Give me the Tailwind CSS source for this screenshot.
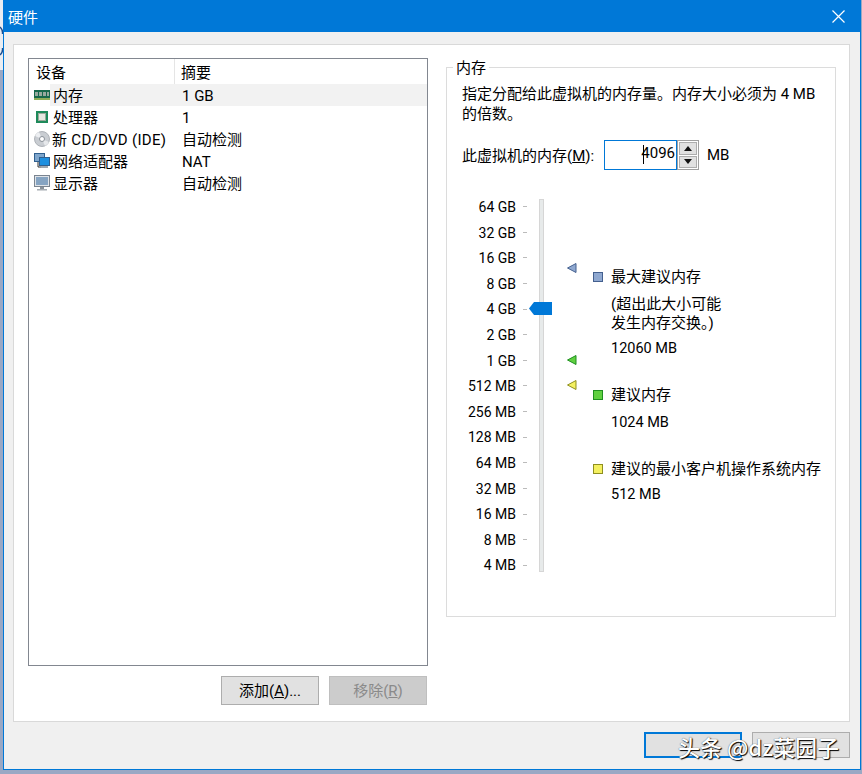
<!DOCTYPE html>
<html><head><meta charset="utf-8"><script src="https://cdn.jsdelivr.net/npm/@tailwindcss/browser@4"></script></head>
<body class="m-0 bg-[#9aa8c4] overflow-hidden">
<div class="w-[862px] h-[774px] relative font-['Roboto','Noto_Sans_CJK_SC',sans-serif] text-[15px] leading-[22px] text-black">
<div class="absolute left-0 top-0 w-[3px] h-[70px] bg-[#e9edf2]">
  <svg width="3" height="70" viewBox="0 0 3 70"><path d="M0 27C2 29 3 31 2.500 34M0 55C2 53 3 51 2.500 48" stroke="#1f4f8f" stroke-width="1.500" fill="none"/></svg>
</div>
<div class="absolute left-[3px] top-0 w-[858px] h-[770px] flex flex-col bg-[#f0f0f0] border border-[#0078d7]">
  <div class="h-[31px] shrink-0 bg-[#0078d7] text-white flex items-center justify-between pl-[4px] pr-[15px]">
    <span class="font-['Noto_Sans_CJK_SC',sans-serif]">硬件</span>
    <svg width="13" height="13" viewBox="0 0 13 13"><path d="M0.500 0.500L12.500 12.500M12.500 0.500L0.500 12.500" stroke="#fff" stroke-width="1.200" fill="none"/></svg>
  </div>
  <div class="ml-[9px] mr-[10px] mt-[12px] h-[678px] bg-white border border-[#d9d9d9] flex pl-[14px] pt-[13px]">
    <div class="w-[400px] shrink-0 flex flex-col">
      <div class="h-[608px] border border-[#828790] bg-white">
        <div class="flex h-[25px] items-center">
          <span class="w-[146px] pl-[7px] border-r border-[#e5e5e5] h-[25px] leading-[29px]">设备</span>
          <span class="pl-[6px] h-[25px] leading-[29px]">摘要</span>
        </div>
        <div class="flex h-[22px] items-center">
          <svg width="16" height="10" viewBox="0 0 16 10" class="ml-[5px] shrink-0"><rect width="16" height="8" fill="#17694c"/><rect x="1" y="2" width="3" height="4" fill="#98aaa0"/><rect x="5" y="2" width="3" height="4" fill="#98aaa0"/><rect x="9" y="2" width="3" height="4" fill="#98aaa0"/><rect x="13" y="2" width="2" height="4" fill="#98aaa0"/><rect y="8" width="16" height="2" fill="#8fae5a"/></svg>
          <div class="flex-1 flex h-[22px] bg-[#f2f2f2] leading-[24px]"><span class="w-[132px] pl-[3px]">内存</span><span>1 GB</span></div>
        </div>
        <div class="flex h-[22px] items-center">
          <div class="ml-[5px] w-[16px] shrink-0 flex justify-center"><svg width="12" height="12" viewBox="0 0 12 12"><rect width="12" height="12" fill="#1e8a5a"/><rect x="2.500" y="2.500" width="7" height="7" fill="#e6e8e0" stroke="#9aa89a"/></svg></div>
          <div class="flex-1 flex h-[22px] leading-[24px]"><span class="w-[132px] pl-[3px]">处理器</span><span>1</span></div>
        </div>
        <div class="flex h-[22px] items-center">
          <svg width="16" height="16" viewBox="0 0 16 16" class="ml-[5px] shrink-0"><circle cx="8" cy="8" r="7.500" fill="#c9cdd2" stroke="#a0a5ab" stroke-width="0.800"/><path d="M8 8L1 5A7.500 7.500 0 0 1 5 1Z" fill="#eceef1"/><path d="M8 8L15 11A7.500 7.500 0 0 1 11 15Z" fill="#e6e8eb"/><circle cx="8" cy="8" r="2.500" fill="#fff" stroke="#8a9098"/></svg>
          <div class="flex-1 flex h-[22px] leading-[24px]"><span class="w-[132px] pl-[2px] tracking-[0.300px] whitespace-nowrap">新 CD/DVD (IDE)</span><span>自动检测</span></div>
        </div>
        <div class="flex h-[22px] items-center">
          <svg width="16" height="16" viewBox="0 0 16 16" class="ml-[5px] shrink-0"><rect x="0.500" y="0.500" width="10" height="8" fill="#7fa6cc" stroke="#2f5f8f"/><path d="M4 9v5h3" stroke="#333" fill="none"/><rect x="5.500" y="4.500" width="10" height="8" fill="#1e90e0" stroke="#2f5f8f"/><rect x="7" y="13" width="7" height="2" fill="#9fa8b0"/></svg>
          <div class="flex-1 flex h-[22px] leading-[24px]"><span class="w-[132px] pl-[3px]">网络适配器</span><span>NAT</span></div>
        </div>
        <div class="flex h-[22px] items-center">
          <svg width="16" height="16" viewBox="0 0 16 16" class="ml-[5px] shrink-0"><rect x="0.500" y="0.500" width="15" height="11" fill="#dfe3e8" stroke="#7a8490"/><rect x="2" y="2" width="12" height="8" fill="#86a4c2"/><rect x="6" y="12" width="4" height="2" fill="#8a929a"/><rect x="3" y="14" width="10" height="1.500" fill="#a8aeb4"/></svg>
          <div class="flex-1 flex h-[22px] leading-[24px]"><span class="w-[132px] pl-[3px]">显示器</span><span>自动检测</span></div>
        </div>
      </div>
      <div class="flex justify-end gap-[10px] mt-[10px] pr-[1px]">
        <button class="w-[98px] h-[29px] bg-[#e1e1e1] border border-[#adadad]">添加(<u>A</u>)...</button>
        <button class="w-[98px] h-[29px] bg-[#cccccc] border border-[#bfbfbf] text-[#8a8a8a]">移除(<u>R</u>)</button>
      </div>
    </div>
    <fieldset class="ml-[18px] w-[390px] h-[559px] border border-[#dcdcdc] p-0 pl-[15px]">
      <legend class="-ml-[9px] px-[3px] leading-[18px]"><span class="inline-block translate-y-[1px]">内存</span></legend>
      <p class="leading-[20px] mt-[7px] w-[360px] pt-[1px] -mb-[1px]">指定分配给此虚拟机的内存量。内存大小必须为 4 MB 的倍数。</p>
      <div class="flex items-center mt-[17px] h-[30px]">
        <span class="w-[142px] pt-[1px]">此虚拟机的内存(<u>M</u>):</span>
        <div class="w-[73px] h-[30px] border border-[#0078d7] text-right pr-[1px] leading-[24px] relative"><span class="absolute left-[38px] top-[4px] w-px h-[19px] bg-black"></span>4096</div>
        <div class="w-[22px] h-[30px] border border-[#a0a0a0] flex flex-col p-[1px] gap-[1px]">
          <div class="flex-1 bg-[#e1e1e1] border border-[#adadad] flex items-center justify-center"><svg width="8" height="5"><path d="M4 0L8 5H0Z" fill="#111"/></svg></div>
          <div class="flex-1 bg-[#e1e1e1] border border-[#adadad] flex items-center justify-center"><svg width="8" height="5"><path d="M0 0H8L4 5Z" fill="#111"/></svg></div>
        </div>
        <span class="ml-[8px]">MB</span>
      </div>
      <div class="flex mt-[24px]">
        <div class="w-[54px] flex flex-col items-end leading-[25.600px] text-[14px] pt-[1px]">
          <span>64 GB</span><span>32 GB</span><span>16 GB</span><span>8 GB</span><span>4 GB</span><span>2 GB</span><span>1 GB</span><span>512 MB</span><span>256 MB</span><span>128 MB</span><span>64 MB</span><span>32 MB</span><span>16 MB</span><span>8 MB</span><span>4 MB</span>
        </div>
        <div class="relative w-[60px] h-[384px]">
          <div class="absolute left-[23px] top-[5px] w-[5px] h-[373px] bg-[#e7eaea] border border-[#d6d6d6]"></div>
          <div class="absolute left-[7px] top-[12px] h-[360px] w-[4px] flex flex-col justify-between">
            <i class="block h-px bg-[#bbb]"></i><i class="block h-px bg-[#bbb]"></i><i class="block h-px bg-[#bbb]"></i><i class="block h-px bg-[#bbb]"></i><i class="block h-px bg-[#bbb]"></i><i class="block h-px bg-[#bbb]"></i><i class="block h-px bg-[#bbb]"></i><i class="block h-px bg-[#bbb]"></i><i class="block h-px bg-[#bbb]"></i><i class="block h-px bg-[#bbb]"></i><i class="block h-px bg-[#bbb]"></i><i class="block h-px bg-[#bbb]"></i><i class="block h-px bg-[#bbb]"></i><i class="block h-px bg-[#bbb]"></i><i class="block h-px bg-[#bbb]"></i>
          </div>
          <svg width="23" height="13" class="absolute left-[13px] top-[108px]"><path d="M0 6.500L5 0H23V13H5Z" fill="#0078d7"/></svg>
          <svg width="10" height="10" class="absolute left-[51px] top-[69px]"><path d="M0.500 5L9 0.500V9.500Z" fill="#8fa8d0" stroke="#44608f"/></svg>
          <svg width="10" height="10" class="absolute left-[51px] top-[161px]"><path d="M0.500 5L9 0.500V9.500Z" fill="#60d040" stroke="#1f8f20"/></svg>
          <svg width="10" height="10" class="absolute left-[51px] top-[186px]"><path d="M0.500 5L9 0.500V9.500Z" fill="#f4f060" stroke="#8f8f20"/></svg>
        </div>
        <div class="flex flex-col ml-[17px] pt-[73px] leading-[20px]">
          <div class="flex items-center gap-[8px]"><i class="block w-[10px] h-[10px] bg-[#8fa8d0] border border-[#44608f]"></i><span>最大建议内存</span></div>
          <div class="pl-[18px] mt-[8px] leading-[19px]">(超出此大小可能<br>发生内存交换。)</div>
          <div class="pl-[18px] mt-[6px] text-[14.500px]">12060 MB</div>
          <div class="flex items-center gap-[8px] mt-[26px]"><i class="block w-[10px] h-[10px] bg-[#60d040] border border-[#1f8f20]"></i><span>建议内存</span></div>
          <div class="pl-[18px] mt-[8px] text-[14.500px]">1024 MB</div>
          <div class="flex items-center gap-[8px] mt-[26px]"><i class="block w-[10px] h-[10px] bg-[#f4f060] border border-[#8f8f20]"></i><span>建议的最小客户机操作系统内存</span></div>
          <div class="pl-[18px] mt-[6px] text-[14.500px]">512 MB</div>
        </div>
      </div>
    </fieldset>
  </div>
  <div class="flex justify-end gap-[10px] mt-[10px] pr-[10px]">
    <div class="w-[98px] h-[26px] bg-[#e1e1e1] border-2 border-[#0078d7]"></div>
    <div class="w-[98px] h-[26px] bg-[#e1e1e1] border border-[#adadad]"></div>
  </div>
</div>
<div class="absolute left-[678px] top-[731px] text-[22px] font-medium leading-[30px] text-white font-['Noto_Sans_CJK_SC',sans-serif] [text-shadow:1px_1px_1px_#000,0_0_1px_#333]">头条 @dz菜园子</div>
</div>
</body></html>
